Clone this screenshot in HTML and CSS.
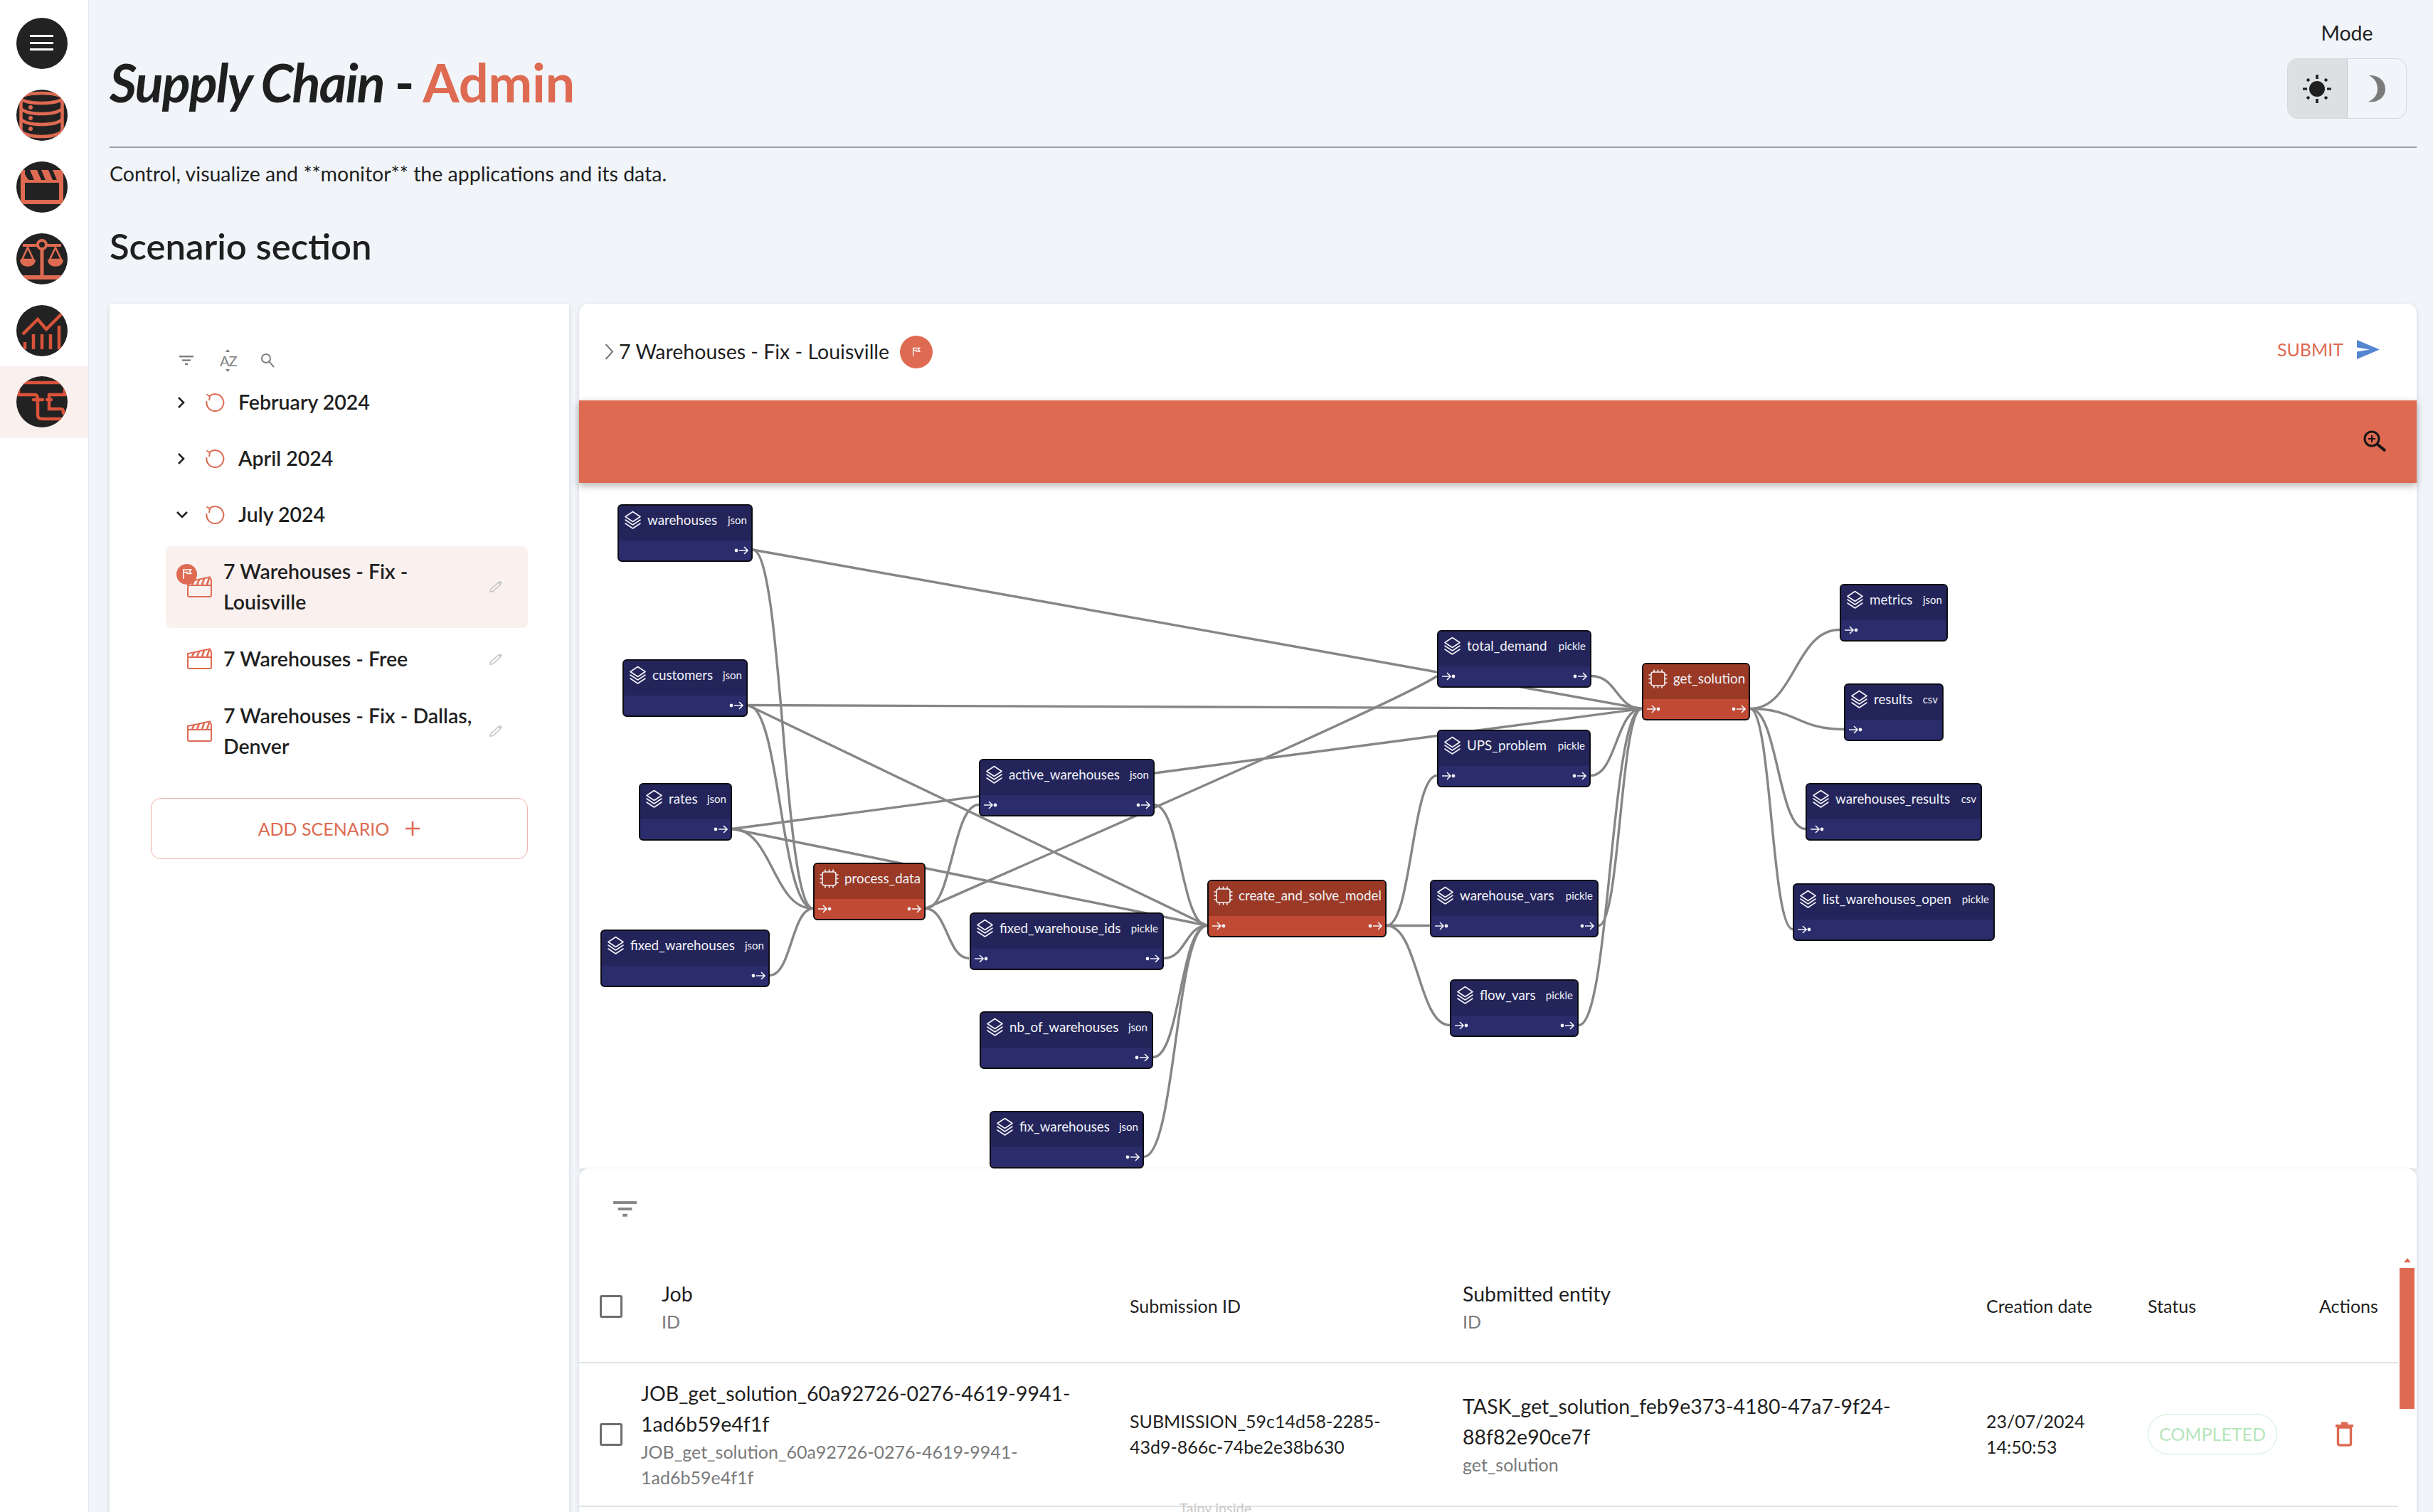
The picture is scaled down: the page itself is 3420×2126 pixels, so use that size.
FILE: index.html
```html
<!DOCTYPE html>
<html lang="en">
<head>
    <meta charset="UTF-8">
    <title>Supply Chain - Admin</title>
    <link rel="stylesheet" href="styles.css">
</head>
<body>
<svg class="defs" width="0" height="0">
    <defs>
        <g id="layers" fill="none" stroke="currentColor" stroke-width="1.6" stroke-linejoin="round" stroke-linecap="round">
            <path d="M12.5 1.5 23 8.5 12.5 15.5 2 8.5Z"/>
            <path d="M2 13 12.5 20 23 13"/>
            <path d="M2 18 12.5 25 23 18"/>
        </g>
        <g id="chip" fill="none" stroke="currentColor" stroke-width="1.6">
            <rect x="4" y="4" width="19" height="19" rx="3"/>
            <path d="M8 0.5V4M13.5 0.5V4M19 0.5V4M8 23V26.5M13.5 23V26.5M19 23V26.5M0.5 8H4M0.5 13.5H4M0.5 19H4M23 8H26.5M23 13.5H26.5M23 19H26.5"/>
        </g>
        <g id="port-out" fill="none" stroke="currentColor" stroke-width="1.6">
            <circle cx="3" cy="7" r="2.4" fill="currentColor" stroke="none"/>
            <path d="M7 7H19M14 2 19 7 14 12"/>
        </g>
        <g id="port-in" fill="none" stroke="currentColor" stroke-width="1.6">
            <path d="M1 7H13M8 2 13 7 8 12"/>
            <circle cx="17" cy="7" r="2.4" fill="currentColor" stroke="none"/>
        </g>
        <g id="refresh" fill="none" stroke="currentColor" stroke-width="2">
            <path d="M6.5 5A12 12 0 1 1 2.5 12"/>
            <path d="M2.5 2.5 7 5.5 6 11"/>
        </g>
        <g id="clapper" fill="none" stroke="currentColor" stroke-width="2">
            <rect x="1" y="13" width="33" height="16" rx="2"/>
            <path d="M1 13V8L32 1.5 34 6V13H1"/>
            <path d="M7 12 10 6M14 12 17 5M21 12 24 4M28 12 31 3" stroke-width="2.6"/>
        </g>
        <g id="pencil" fill="none" stroke="currentColor" stroke-width="1.5">
            <path d="M1 16 2 12.5 12.5 3 15.5 6 5 15.5Z"/>
            <path d="M14 1.5 17 4.5" stroke-width="2.4"/>
        </g>
        <g id="filter" fill="currentColor">
            <rect x="0" y="0" width="20" height="2.4"/>
            <rect x="4" y="5.4" width="12" height="2.4"/>
            <rect x="8" y="10.8" width="4" height="2.4"/>
        </g>
        <g id="flag" fill="none" stroke="currentColor" stroke-width="1.6">
            <path d="M2 1V15"/>
            <path d="M2 2H12.5L10.5 4.5 12.5 7.5H7V5.5H2"/>
        </g>
    </defs>
</svg>

<div class="app">
    <nav class="sidebar">
        <div class="nav-item">
            <div class="avatar">
                <svg viewBox="0 0 72 72" width="72" height="72" fill="#fff">
                    <rect x="19" y="24" width="33" height="3"/>
                    <rect x="19" y="34" width="33" height="3"/>
                    <rect x="19" y="43" width="33" height="3"/>
                </svg>
            </div>
        </div>
        <div class="nav-item">
            <div class="avatar">
                <svg viewBox="0 0 72 72" width="72" height="72" fill="none" stroke="#de6a52" stroke-width="4.5">
                    <ellipse cx="35.5" cy="12" rx="29" ry="7"/>
                    <path d="M6.5 12V56C6.5 62 20 66 35.5 66S64.5 62 64.5 56V12"/>
                    <path d="M6.5 27C12 32 20 34 35.5 34S59 32 64.5 27"/>
                    <path d="M6.5 42C12 47 20 49 35.5 49S59 47 64.5 42"/>
                    <circle cx="20" cy="25" r="3" fill="#de6a52" stroke="none"/>
                    <circle cx="20" cy="40" r="3" fill="#de6a52" stroke="none"/>
                    <circle cx="20" cy="55" r="3" fill="#de6a52" stroke="none"/>
                </svg>
            </div>
        </div>
        <div class="nav-item">
            <div class="avatar">
                <svg viewBox="0 0 72 72" width="72" height="72">
                    <path fill="#de6a52" fill-rule="evenodd" d="M6 12H66V60H6ZM12 30V54H60V30Z"/>
                    <path fill="#222" d="M12 12H19L25 26H17L12 18ZM29 12H35L41 26H35ZM45 12H51L57 26H51Z"/>
                </svg>
            </div>
        </div>
        <div class="nav-item">
            <div class="avatar">
                <svg viewBox="0 0 72 72" width="72" height="72" fill="none" stroke="#de6a52" stroke-width="4">
                    <path d="M9 17H63"/>
                    <circle cx="36" cy="16" r="6" fill="#222"/>
                    <path d="M36 22V60" stroke-width="5"/>
                    <path d="M0 62H72" stroke-width="6"/>
                    <path d="M16 20 8 37H24Z" stroke-width="2.6"/>
                    <path d="M5 37H27C27 50 5 50 5 37Z" fill="#de6a52" stroke="none"/>
                    <path d="M55 20 47 37H63Z" stroke-width="2.6"/>
                    <path d="M44 37H66C66 50 44 50 44 37Z" fill="#de6a52" stroke="none"/>
                </svg>
            </div>
        </div>
        <div class="nav-item">
            <div class="avatar">
                <svg viewBox="0 0 72 72" width="72" height="72" fill="none" stroke="#d9533a" stroke-width="4.5">
                    <path d="M9 41 30 20 42 34 64 12"/>
                    <path d="M12 62V52M24 62V41M36 62V41M48 62V41M60 62V29" stroke-width="4.5"/>
                </svg>
            </div>
        </div>
        <div class="nav-item nav-active">
            <div class="avatar">
                <svg viewBox="0 0 72 72" width="72" height="72" fill="none" stroke="#d9533a" stroke-width="4.5" stroke-linecap="round">
                    <path d="M4 14V9H68V14"/>
                    <path d="M3 18V26H26C30 26 30 30 30 33V54C30 60 34 60 38 60H66"/>
                    <path d="M24 33H37M43 33H49"/>
                    <path d="M46 26H68V18"/>
                    <path d="M46 26V46H62C66 46 66 48 66 52"/>
                </svg>
            </div>
        </div>
    </nav>

    <main class="main">
        <header class="top">
            <h1 class="title"><em>Supply Chain</em> - <span class="accent">Admin</span></h1>
            <div class="mode">
                <div class="mode-label">Mode</div>
                <div class="mode-toggle">
                    <div class="mode-btn mode-on">
                        <svg viewBox="0 0 40 40" width="40" height="40" fill="#1f1f1f">
                            <circle cx="20" cy="20" r="11"/>
                            <rect x="18.2" y="0" width="3.6" height="6"/>
                            <rect x="18.2" y="34" width="3.6" height="6"/>
                            <rect x="0" y="18.4" width="6" height="3.2"/>
                            <rect x="34" y="18.4" width="6" height="3.2"/>
                            <rect x="5.5" y="5.5" width="4" height="4" transform="rotate(45 7.5 7.5)"/>
                            <rect x="30.5" y="5.5" width="4" height="4" transform="rotate(45 32.5 7.5)"/>
                            <rect x="5.5" y="30.5" width="4" height="4" transform="rotate(45 7.5 32.5)"/>
                            <rect x="30.5" y="30.5" width="4" height="4" transform="rotate(45 32.5 32.5)"/>
                        </svg>
                    </div>
                    <div class="mode-btn">
                        <svg viewBox="0 0 26 38" width="26" height="38" fill="#7a7a7a">
                            <path d="M2 0C14 -1 25 7 25 19S14 39 1 37C9 34 14 27 14 19S10 4 2 0Z"/>
                        </svg>
                    </div>
                </div>
            </div>
        </header>

        <p class="desc">Control, visualize and **monitor** the applications and its data.</p>
        <h2 class="section-title">Scenario section</h2>

        <div class="columns">
            <aside class="card tree-card">
                <div class="tree-tools">
                    <svg width="20" height="14" viewBox="0 0 20 14" class="tool"><use href="#filter"/></svg>
                    <span class="tool-az">AZ</span>
                    <svg width="20" height="22" viewBox="0 0 20 22" class="tool" fill="none" stroke="currentColor" stroke-width="2"><circle cx="8" cy="8" r="6"/><path d="M12.5 12.5 19 20"/></svg>
                </div>
                <div class="cycle">
                    <svg class="chev" width="12" height="20" viewBox="0 0 12 20"><path d="M2 3 9 10 2 17" fill="none" stroke="#1f1f1f" stroke-width="2.6"/></svg>
                    <svg class="cycle-icon" width="28" height="28" viewBox="0 0 28 28"><use href="#refresh"/></svg>
                    <span>February 2024</span>
                </div>
                <div class="cycle">
                    <svg class="chev" width="12" height="20" viewBox="0 0 12 20"><path d="M2 3 9 10 2 17" fill="none" stroke="#1f1f1f" stroke-width="2.6"/></svg>
                    <svg class="cycle-icon" width="28" height="28" viewBox="0 0 28 28"><use href="#refresh"/></svg>
                    <span>April 2024</span>
                </div>
                <div class="cycle">
                    <svg class="chev chev-down" width="18" height="12" viewBox="0 0 18 12"><path d="M2 2 9 9 16 2" fill="none" stroke="#1f1f1f" stroke-width="2.6"/></svg>
                    <svg class="cycle-icon" width="28" height="28" viewBox="0 0 28 28"><use href="#refresh"/></svg>
                    <span>July 2024</span>
                </div>

                <div class="scenario scenario-on">
                    <svg class="clap" width="35" height="31" viewBox="0 0 35 31"><use href="#clapper"/></svg>
                    <span class="flag-badge"><svg width="14" height="16" viewBox="0 0 14 16"><use href="#flag"/></svg></span>
                    <span class="scenario-name">7 Warehouses - Fix - Louisville</span>
                    <svg class="pencil" width="18" height="18" viewBox="0 0 18 18"><use href="#pencil"/></svg>
                </div>
                <div class="scenario">
                    <svg class="clap" width="35" height="31" viewBox="0 0 35 31"><use href="#clapper"/></svg>
                    <span class="scenario-name">7 Warehouses - Free</span>
                    <svg class="pencil" width="18" height="18" viewBox="0 0 18 18"><use href="#pencil"/></svg>
                </div>
                <div class="scenario">
                    <svg class="clap" width="35" height="31" viewBox="0 0 35 31"><use href="#clapper"/></svg>
                    <span class="scenario-name">7 Warehouses - Fix - Dallas, Denver</span>
                    <svg class="pencil" width="18" height="18" viewBox="0 0 18 18"><use href="#pencil"/></svg>
                </div>

                <button class="add-btn">ADD SCENARIO <svg width="22" height="22" viewBox="0 0 22 22" fill="none" stroke="currentColor" stroke-width="2.6"><path d="M11 1V21M1 11H21"/></svg></button>
            </aside>

            <section class="right">
                <div class="card graph-card">
                    <div class="graph-head">
                        <svg class="crumb-chev" width="13" height="23" viewBox="0 0 13 23"><path d="M1.5 1 11 11.5 1.5 22" fill="none" stroke="#777" stroke-width="2"/></svg>
                        <span class="crumb">7 Warehouses - Fix - Louisville</span>
                        <span class="crumb-badge"><svg width="12" height="15" viewBox="0 0 14 16"><use href="#flag"/></svg></span>
                        <span class="submit">SUBMIT</span>
                        <svg class="send" width="32" height="27" viewBox="0 0 32 27"><path d="M0 0 32 13.5 0 27V16.5L18 13.5 0 10.5Z" fill="#5586d0"/></svg>
                    </div>
                    <div class="zoom-bar">
                        <svg width="32" height="31" viewBox="0 0 32 31" fill="none" stroke="#161616" stroke-width="3"><circle cx="12" cy="12" r="10"/><path d="M7 12H17M12 7V17" stroke-width="2"/><path d="M19 19 31 29" stroke-width="4"/></svg>
                    </div>
                    <div class="canvas">
                        <svg class="edges" width="2583" height="964" viewBox="814 678 2583 964" fill="none" stroke="#868686" stroke-width="3.4">
                            <path d="M1058 772C1100.5 772 1100.5 1276.5 1143 1276.5"/>
                            <path d="M1051 990.5C1097 990.5 1097 1276.5 1143 1276.5"/>
                            <path d="M1029 1164.5C1086 1164.5 1086 1276.5 1143 1276.5"/>
                            <path d="M1082 1370.5C1112.5 1370.5 1112.5 1276.5 1143 1276.5"/>
                            <path d="M1058 772C1100 779 2266 988 2308 995.5"/>
                            <path d="M1051 990.5C1095 1012 1653 1279 1697 1300.5"/>
                            <path d="M1051 990.5C1100 990.5 2250 995.5 2308 995.5"/>
                            <path d="M1029 1164.5C1075 1158 2262 1002 2308 995.5"/>
                            <path d="M1029 1164.5C1075 1174 1651 1291 1697 1300.5"/>
                            <path d="M1301 1276.5C1340 1258 1960 990 2020 949.5"/>
                            <path d="M1301 1276.5C1338.5 1276.5 1338.5 1130.5 1376 1130.5"/>
                            <path d="M1301 1276.5C1331.5 1276.5 1331.5 1346.5 1362 1346.5"/>
                            <path d="M1622 1130.5C1659.5 1130.5 1659.5 1300.5 1697 1300.5"/>
                            <path d="M1636 1346.5C1666.5 1346.5 1666.5 1300.5 1697 1300.5"/>
                            <path d="M1621 1485.5C1659 1485.5 1659 1300.5 1697 1300.5"/>
                            <path d="M1608 1625.5C1652.5 1625.5 1652.5 1300.5 1697 1300.5"/>
                            <path d="M1949 1300.5C1984.5 1300.5 1984.5 1089.5 2020 1089.5"/>
                            <path d="M1949 1300.5H2010"/>
                            <path d="M1949 1300.5C1993.5 1300.5 1993.5 1440.5 2038 1440.5"/>
                            <path d="M2237 949.5C2272.5 949.5 2272.5 995.5 2308 995.5"/>
                            <path d="M2236 1089.5C2272 1089.5 2272 995.5 2308 995.5"/>
                            <path d="M2247 1300.5C2277.5 1300.5 2277.5 995.5 2308 995.5"/>
                            <path d="M2219 1440.5C2263.5 1440.5 2263.5 995.5 2308 995.5"/>
                            <path d="M2460 995.5C2523 995.5 2523 884.5 2586 884.5"/>
                            <path d="M2460 995.5C2526 995.5 2526 1024.5 2592 1024.5"/>
                            <path d="M2460 995.5C2499 995.5 2499 1164.5 2538 1164.5"/>
                            <path d="M2460 995.5C2490 995.5 2490 1305.5 2520 1305.5"/>
                        </svg>

                        <div class="node n-warehouses"><div class="node-head"><svg class="node-icon" width="25" height="27" viewBox="0 0 25 27"><use href="#layers"/></svg><span class="node-name">warehouses</span><span class="node-type">json</span></div><div class="node-foot foot-out"><svg width="20" height="14" viewBox="0 0 20 14"><use href="#port-out"/></svg></div></div>
                        <div class="node n-customers"><div class="node-head"><svg class="node-icon" width="25" height="27" viewBox="0 0 25 27"><use href="#layers"/></svg><span class="node-name">customers</span><span class="node-type">json</span></div><div class="node-foot foot-out"><svg width="20" height="14" viewBox="0 0 20 14"><use href="#port-out"/></svg></div></div>
                        <div class="node n-rates"><div class="node-head"><svg class="node-icon" width="25" height="27" viewBox="0 0 25 27"><use href="#layers"/></svg><span class="node-name">rates</span><span class="node-type">json</span></div><div class="node-foot foot-out"><svg width="20" height="14" viewBox="0 0 20 14"><use href="#port-out"/></svg></div></div>
                        <div class="node n-fixed"><div class="node-head"><svg class="node-icon" width="25" height="27" viewBox="0 0 25 27"><use href="#layers"/></svg><span class="node-name">fixed_warehouses</span><span class="node-type">json</span></div><div class="node-foot foot-out"><svg width="20" height="14" viewBox="0 0 20 14"><use href="#port-out"/></svg></div></div>
                        <div class="node task n-process"><div class="node-head"><svg class="node-icon" width="27" height="27" viewBox="0 0 27 27"><use href="#chip"/></svg><span class="node-name">process_data</span></div><div class="node-foot"><svg width="20" height="14" viewBox="0 0 20 14"><use href="#port-in"/></svg><svg width="20" height="14" viewBox="0 0 20 14"><use href="#port-out"/></svg></div></div>
                        <div class="node n-active"><div class="node-head"><svg class="node-icon" width="25" height="27" viewBox="0 0 25 27"><use href="#layers"/></svg><span class="node-name">active_warehouses</span><span class="node-type">json</span></div><div class="node-foot"><svg width="20" height="14" viewBox="0 0 20 14"><use href="#port-in"/></svg><svg width="20" height="14" viewBox="0 0 20 14"><use href="#port-out"/></svg></div></div>
                        <div class="node n-ids"><div class="node-head"><svg class="node-icon" width="25" height="27" viewBox="0 0 25 27"><use href="#layers"/></svg><span class="node-name">fixed_warehouse_ids</span><span class="node-type">pickle</span></div><div class="node-foot"><svg width="20" height="14" viewBox="0 0 20 14"><use href="#port-in"/></svg><svg width="20" height="14" viewBox="0 0 20 14"><use href="#port-out"/></svg></div></div>
                        <div class="node n-nb"><div class="node-head"><svg class="node-icon" width="25" height="27" viewBox="0 0 25 27"><use href="#layers"/></svg><span class="node-name">nb_of_warehouses</span><span class="node-type">json</span></div><div class="node-foot foot-out"><svg width="20" height="14" viewBox="0 0 20 14"><use href="#port-out"/></svg></div></div>
                        <div class="node n-fix"><div class="node-head"><svg class="node-icon" width="25" height="27" viewBox="0 0 25 27"><use href="#layers"/></svg><span class="node-name">fix_warehouses</span><span class="node-type">json</span></div><div class="node-foot foot-out"><svg width="20" height="14" viewBox="0 0 20 14"><use href="#port-out"/></svg></div></div>
                        <div class="node task n-create"><div class="node-head"><svg class="node-icon" width="27" height="27" viewBox="0 0 27 27"><use href="#chip"/></svg><span class="node-name">create_and_solve_model</span></div><div class="node-foot"><svg width="20" height="14" viewBox="0 0 20 14"><use href="#port-in"/></svg><svg width="20" height="14" viewBox="0 0 20 14"><use href="#port-out"/></svg></div></div>
                        <div class="node n-demand"><div class="node-head"><svg class="node-icon" width="25" height="27" viewBox="0 0 25 27"><use href="#layers"/></svg><span class="node-name">total_demand</span><span class="node-type">pickle</span></div><div class="node-foot"><svg width="20" height="14" viewBox="0 0 20 14"><use href="#port-in"/></svg><svg width="20" height="14" viewBox="0 0 20 14"><use href="#port-out"/></svg></div></div>
                        <div class="node n-ups"><div class="node-head"><svg class="node-icon" width="25" height="27" viewBox="0 0 25 27"><use href="#layers"/></svg><span class="node-name">UPS_problem</span><span class="node-type">pickle</span></div><div class="node-foot"><svg width="20" height="14" viewBox="0 0 20 14"><use href="#port-in"/></svg><svg width="20" height="14" viewBox="0 0 20 14"><use href="#port-out"/></svg></div></div>
                        <div class="node n-vars"><div class="node-head"><svg class="node-icon" width="25" height="27" viewBox="0 0 25 27"><use href="#layers"/></svg><span class="node-name">warehouse_vars</span><span class="node-type">pickle</span></div><div class="node-foot"><svg width="20" height="14" viewBox="0 0 20 14"><use href="#port-in"/></svg><svg width="20" height="14" viewBox="0 0 20 14"><use href="#port-out"/></svg></div></div>
                        <div class="node n-flow"><div class="node-head"><svg class="node-icon" width="25" height="27" viewBox="0 0 25 27"><use href="#layers"/></svg><span class="node-name">flow_vars</span><span class="node-type">pickle</span></div><div class="node-foot"><svg width="20" height="14" viewBox="0 0 20 14"><use href="#port-in"/></svg><svg width="20" height="14" viewBox="0 0 20 14"><use href="#port-out"/></svg></div></div>
                        <div class="node task n-solution"><div class="node-head"><svg class="node-icon" width="27" height="27" viewBox="0 0 27 27"><use href="#chip"/></svg><span class="node-name">get_solution</span></div><div class="node-foot"><svg width="20" height="14" viewBox="0 0 20 14"><use href="#port-in"/></svg><svg width="20" height="14" viewBox="0 0 20 14"><use href="#port-out"/></svg></div></div>
                        <div class="node n-metrics"><div class="node-head"><svg class="node-icon" width="25" height="27" viewBox="0 0 25 27"><use href="#layers"/></svg><span class="node-name">metrics</span><span class="node-type">json</span></div><div class="node-foot"><svg width="20" height="14" viewBox="0 0 20 14"><use href="#port-in"/></svg></div></div>
                        <div class="node n-results"><div class="node-head"><svg class="node-icon" width="25" height="27" viewBox="0 0 25 27"><use href="#layers"/></svg><span class="node-name">results</span><span class="node-type">csv</span></div><div class="node-foot"><svg width="20" height="14" viewBox="0 0 20 14"><use href="#port-in"/></svg></div></div>
                        <div class="node n-wres"><div class="node-head"><svg class="node-icon" width="25" height="27" viewBox="0 0 25 27"><use href="#layers"/></svg><span class="node-name">warehouses_results</span><span class="node-type">csv</span></div><div class="node-foot"><svg width="20" height="14" viewBox="0 0 20 14"><use href="#port-in"/></svg></div></div>
                        <div class="node n-list"><div class="node-head"><svg class="node-icon" width="25" height="27" viewBox="0 0 25 27"><use href="#layers"/></svg><span class="node-name">list_warehouses_open</span><span class="node-type">pickle</span></div><div class="node-foot"><svg width="20" height="14" viewBox="0 0 20 14"><use href="#port-in"/></svg></div></div>
                    </div>
                </div>

                <div class="card jobs-card">
                    <div class="jobs-filter"><svg width="33" height="23" viewBox="0 0 20 14"><use href="#filter"/></svg></div>
                    <div class="job-grid job-header">
                        <div class="cell-check"><span class="checkbox"></span></div>
                        <div class="cell-job"><div class="main-text">Job</div><div class="sub-text">ID</div></div>
                        <div class="small-text">Submission ID</div>
                        <div><div class="main-text">Submitted entity</div><div class="sub-text">ID</div></div>
                        <div class="small-text">Creation date</div>
                        <div class="small-text">Status</div>
                        <div class="small-text">Actions</div>
                    </div>
                    <div class="job-grid job-row">
                        <div class="cell-check"><span class="checkbox"></span></div>
                        <div class="wrap-job"><div class="main-text">JOB_get_solution_60a92726-0276-4619-9941-1ad6b59e4f1f</div><div class="sub-text">JOB_get_solution_60a92726-0276-4619-9941-1ad6b59e4f1f</div></div>
                        <div class="small-text wrap-sub">SUBMISSION_59c14d58-2285-43d9-866c-74be2e38b630</div>
                        <div class="wrap-entity"><div class="main-text">TASK_get_solution_feb9e373-4180-47a7-9f24-88f82e90ce7f</div><div class="sub-text">get_solution</div></div>
                        <div class="small-text wrap-date">23/07/2024 14:50:53</div>
                        <div><span class="chip">COMPLETED</span></div>
                        <div class="cell-trash">
                            <svg width="25" height="35" viewBox="0 0 25 35" fill="none" stroke="#de6a52" stroke-width="3.4"><path d="M0 6H25" stroke-width="4"/><path d="M8 2.5H17" stroke-width="4"/><rect x="3.5" y="8" width="18" height="25" rx="2"/></svg>
                        </div>
                    </div>
                    <div class="scroll-arrow"></div>
                    <div class="scroll-thumb"></div>
                </div>
            </section>
        </div>
    </main>
</div>
<div class="taipy-inside">Taipy inside</div>
</body>
</html>
```

FILE: styles.css
```css
* {
    box-sizing: border-box;
}

html, body {
    margin: 0;
    height: 100%;
    overflow: hidden;
}

body {
    font-family: "Lato", "Liberation Sans", sans-serif;
    font-size: 28.5px;
    line-height: 1.5;
    color: #1f1f1f;
    background: #f1f4f8;
}

.defs {
    position: absolute;
}

.app {
    display: flex;
    height: 100vh;
}

/* sidebar */
.sidebar {
    width: 125px;
    flex: none;
    background: #fff;
    border-right: 1px solid #e6e8eb;
    padding-top: 11px;
}

.nav-item {
    height: 100.8px;
    display: flex;
    align-items: center;
    padding-left: 23px;
}

.nav-active {
    background: #faf1ef;
}

.avatar {
    width: 72px;
    height: 72px;
    border-radius: 50%;
    background: #222;
    overflow: hidden;
}

.avatar svg {
    display: block;
}

/* header */
.main {
    flex: 1;
    min-width: 0;
    padding: 0 23px 0 29px;
}

.top {
    display: flex;
    justify-content: space-between;
    height: 208px;
    border-bottom: 2px solid #9a9da1;
}

.title {
    margin: 64px 0 0;
    font-size: 74px;
    line-height: 104px;
    font-weight: 700;
    letter-spacing: -3px;
}

.title em {
    font-weight: 700;
    letter-spacing: -1.9px;
}

.accent {
    color: #de6a52;
    font-weight: 700;
    letter-spacing: -0.3px;
}

.mode {
    margin: 24px 14px 0 0;
    width: 168px;
}

.mode-label {
    text-align: center;
    line-height: 44px;
}

.mode-toggle {
    display: flex;
    height: 85px;
    margin-top: 14px;
    border: 1px solid #d6d9dc;
    border-radius: 14px;
    overflow: hidden;
}

.mode-btn {
    flex: 1;
    display: flex;
    align-items: center;
    justify-content: center;
}

.mode-on {
    background: #dde0e3;
    border-right: 1px solid #c8cbce;
}

.desc {
    margin: 15px 0 0;
}

.section-title {
    margin: 45px 0 0;
    font-size: 50.8px;
    line-height: 70px;
    font-weight: 600;
}

/* two columns */
.columns {
    display: grid;
    grid-template-columns: 646px 1fr;
    gap: 14px;
    margin-top: 46px;
}

.card {
    background: #fff;
    box-shadow: 0 2px 6px rgba(90, 100, 110, 0.2);
}

/* scenario tree */
.tree-card {
    height: 1750px;
    padding: 61px 58px 0;
}

.tree-tools {
    display: flex;
    align-items: center;
    height: 38px;
    margin-left: 40px;
    gap: 37px;
    color: #7d7d7d;
}

.tool-az {
    position: relative;
    width: 20px;
    font-size: 20px;
    line-height: 1;
    letter-spacing: -1px;
    white-space: nowrap;
}

.tool-az::before,
.tool-az::after {
    content: "";
    position: absolute;
    left: 8px;
    border: 3px solid transparent;
}

.tool-az::before {
    top: -6px;
    border-top: 0;
    border-bottom: 4px solid #7d7d7d;
}

.tool-az::after {
    bottom: -6px;
    border-bottom: 0;
    border-top: 4px solid #7d7d7d;
}

.cycle {
    display: flex;
    align-items: center;
    height: 79px;
    font-weight: 600;
    margin-left: 21px;
    position: relative;
    padding-left: 102px;
}

.chev {
    position: absolute;
    left: 16px;
    top: 30px;
}

.chev-down {
    left: 14px;
    top: 34px;
}

.cycle-icon {
    position: absolute;
    left: 55px;
    top: 26px;
    color: #de6a52;
}

.scenario {
    display: flex;
    align-items: center;
    position: relative;
    margin-left: 21px;
    padding: 14.5px 0 14.5px 30px;
    min-height: 88px;
    border-radius: 8px;
    font-weight: 600;
    line-height: 43px;
}

.scenario-on {
    background: #faf1ef;
    margin-top: 5px;
}

.clap {
    flex: none;
    color: #de6a52;
    margin-right: 16px;
}

.flag-badge {
    position: absolute;
    left: 15px;
    top: 25px;
    width: 29px;
    height: 29px;
    border-radius: 50%;
    background: #de6a52;
    color: #fff;
    display: flex;
    align-items: center;
    justify-content: center;
}

.scenario-name {
    width: 360px;
    flex: none;
}

.pencil {
    margin-left: 14px;
    color: #c4c4c4;
}

.add-btn {
    display: flex;
    align-items: center;
    justify-content: center;
    gap: 22px;
    width: 530px;
    height: 86px;
    margin-top: 36px;
    background: #fff;
    border: 1px solid #eeb4a8;
    border-radius: 14px;
    color: #de6a52;
    font-family: inherit;
    font-size: 25px;
}

/* graph */
.right {
    min-width: 0;
}

.graph-card {
    height: 1216px;
    border-radius: 14px 14px 0 0;
}

.graph-head {
    display: flex;
    align-items: center;
    height: 136px;
    padding: 0 52px 0 36px;
}

.crumb {
    margin-left: 7px;
}

.crumb-badge {
    display: flex;
    align-items: center;
    justify-content: center;
    width: 46px;
    height: 46px;
    margin-left: 15px;
    border-radius: 50%;
    background: #de6a52;
    color: #fff;
}

.submit {
    margin-left: auto;
    margin-bottom: 7px;
    font-size: 25px;
    color: #de6a52;
}

.send {
    margin-left: 19px;
    margin-bottom: 6px;
}

.zoom-bar {
    position: relative;
    display: flex;
    align-items: center;
    justify-content: flex-end;
    height: 116px;
    padding-right: 43px;
    background: #de6a52;
    box-shadow: 0 4px 10px rgba(0, 0, 0, 0.3);
}

.canvas {
    position: relative;
    height: 964px;
}

.edges {
    position: absolute;
    left: 0;
    top: 0;
}

.node {
    position: absolute;
    height: 81px;
    display: flex;
    flex-direction: column;
    border: 2px solid #0c0c14;
    border-radius: 6px;
    overflow: hidden;
    color: #f2f2f8;
    background: #2b2c6b;
}

.node-head {
    flex: none;
    display: flex;
    align-items: center;
    height: 49px;
    padding: 0 6px 7px 7px;
    background: #23255a;
    white-space: nowrap;
}

.node-icon {
    flex: none;
    margin-right: 8px;
}

.node-name {
    font-size: 18.8px;
    line-height: 1;
}

.node-type {
    margin-left: auto;
    font-size: 15px;
    line-height: 1;
}

.node-foot {
    flex: 1;
    display: flex;
    align-items: center;
    justify-content: space-between;
    padding: 0 4px;
}

.foot-out {
    justify-content: flex-end;
}

.task {
    background: #c04a33;
}

.task .node-head {
    background: #9a3a26;
}

/* node places on the canvas */
.n-warehouses { left: 54px; top: 30px; width: 190px; }
.n-customers { left: 61px; top: 248px; width: 176px; }
.n-rates { left: 84px; top: 422px; width: 131px; }
.n-fixed { left: 30px; top: 628px; width: 238px; }
.n-process { left: 329px; top: 534px; width: 158px; }
.n-active { left: 562px; top: 388px; width: 247px; }
.n-ids { left: 549px; top: 604px; width: 273px; }
.n-nb { left: 563px; top: 743px; width: 244px; }
.n-fix { left: 577px; top: 883px; width: 217px; }
.n-create { left: 883px; top: 558px; width: 252px; }
.n-demand { left: 1206px; top: 207px; width: 217px; }
.n-ups { left: 1206px; top: 347px; width: 216px; }
.n-vars { left: 1196px; top: 558px; width: 237px; }
.n-flow { left: 1224px; top: 698px; width: 181px; }
.n-solution { left: 1494px; top: 253px; width: 152px; }
.n-metrics { left: 1772px; top: 142px; width: 152px; }
.n-results { left: 1778px; top: 282px; width: 140px; }
.n-wres { left: 1724px; top: 422px; width: 248px; }
.n-list { left: 1706px; top: 563px; width: 284px; }

/* jobs table */
.jobs-card {
    position: relative;
    height: 500px;
    border-radius: 14px 14px 0 0;
}

.jobs-filter {
    height: 122px;
    padding: 46px 0 0 48px;
    color: #868686;
}

.jobs-filter svg {
    display: block;
}

.job-grid {
    display: grid;
    grid-template-columns: 87px 687px 468px 736px 227px 241px 111px;
    align-items: center;
    width: 2557px;
    border-bottom: 2px solid #e2e3e5;
}

.job-header {
    height: 152px;
    padding-bottom: 6px;
}

.job-row {
    height: 202px;
}

.cell-check {
    padding-left: 29px;
    display: flex;
}

.checkbox {
    width: 32px;
    height: 32px;
    border: 3.5px solid #6e6e6e;
    border-radius: 3px;
}

.cell-job {
    padding-left: 29px;
}

.main-text {
    font-size: 28.5px;
    line-height: 43px;
}

.sub-text {
    font-size: 25px;
    line-height: 35.5px;
    color: #7a7a7a;
}

.small-text {
    font-size: 25px;
    line-height: 35.5px;
}

.wrap-job {
    padding-right: 50px;
}

.wrap-sub {
    padding-right: 90px;
}

.wrap-entity {
    padding-right: 100px;
}

.wrap-date {
    padding-right: 70px;
}

.chip {
    display: inline-block;
    width: 182px;
    height: 57px;
    border: 1px solid #cdeed1;
    border-radius: 29px;
    text-align: center;
    font-size: 25px;
    line-height: 55px;
    color: #b6e6bb;
}

.cell-trash {
    padding-left: 23px;
    display: flex;
}

.scroll-arrow {
    position: absolute;
    left: 2565px;
    top: 126px;
    border: 5px solid transparent;
    border-top: 0;
    border-bottom: 6px solid #de6a52;
}

.scroll-thumb {
    position: absolute;
    left: 2559px;
    top: 140px;
    width: 21px;
    height: 198px;
    background: #de6a52;
}

.taipy-inside {
    position: absolute;
    left: 1658px;
    top: 2105px;
    font-size: 20px;
    line-height: 30px;
    color: #c9c9c9;
}
```
